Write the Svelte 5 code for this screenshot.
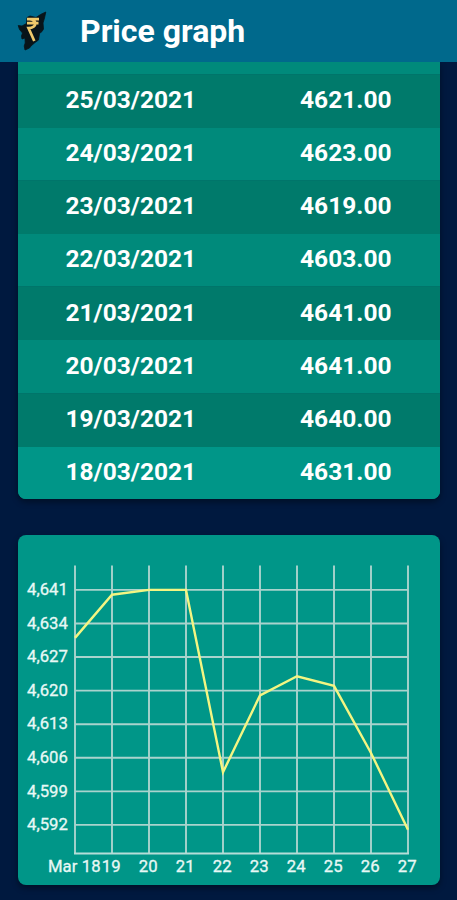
<script>
  const rows = [
    { date: '25/03/2021', price: 4621 },
    { date: '24/03/2021', price: 4623 },
    { date: '23/03/2021', price: 4619 },
    { date: '22/03/2021', price: 4603 },
    { date: '21/03/2021', price: 4641 },
    { date: '20/03/2021', price: 4641 },
    { date: '19/03/2021', price: 4640 },
    { date: '18/03/2021', price: 4631 }
  ];

  // oldest first, the last two days are newer than the table above
  const prices = [...rows.map((row) => row.price).reverse(), 4607, 4591];
  const labels = ['Mar 18', '19', '20', '21', '22', '23', '24', '25', '26', '27'];
  const ticks = [4641, 4634, 4627, 4620, 4613, 4606, 4599, 4592];

  const left = 57;
  const right = 390;
  const top = 30.5;
  const bottom = 318.6;

  const x = (i) => left + i * 37;
  const y = (value) => 54.9 + (4641 - value) * 4.796;

  const line = prices.map((price, i) => `${x(i)},${y(price)}`).join(' ');
</script>

<header class="app-bar">
  <svg class="logo" viewBox="0 0 32 44" width="32" height="44">
    <path
      class="map"
      d="M28.8 3 L27.5 9 L26 14 L26.5 20 L25 22.5 L22.5 24.5 L21.5 31 L18 33.5 L14 37 L12.5 39 L8 41 L7.2 37 L8.2 34 L8 29 L5 30 L4.5 27 L5.5 24 L2.5 20.5 L1.2 16.5 L5 17 L9.5 14.5 L10 8.5 L13 7 L19 8.5 L23.5 5.5 Z"
    />
    <path class="rupee" d="M10 10.2 H22 M10 14.2 H21.5 M12 10.2 C20.5 10.2 20.5 19 11.5 19 L17.3 32" />
  </svg>
  <h1>Price graph</h1>
</header>

<main>
  <section class="card prices">
    <div class="row cut"></div>
    {#each rows as row}
      <div class="row">
        <span class="date">{row.date}</span>
        <span class="price">{row.price.toFixed(2)}</span>
      </div>
    {/each}
  </section>

  <section class="card chart">
    <svg viewBox="0 0 422 350" width="422" height="350">
      {#each ticks as tick}
        <line class="grid" x1={left} x2={right} y1={y(tick)} y2={y(tick)} />
        <text class="label" x="9" y={y(tick) + 5.3}>{tick.toLocaleString('en-US')}</text>
      {/each}
      {#each labels as label, i}
        <line class="grid" x1={x(i)} x2={x(i)} y1={top} y2={bottom} />
        <text class="label" text-anchor="middle" x={x(i) - 0.7} y="337">{label}</text>
      {/each}
      <line class="axis" x1={left - 1} x2={right + 1} y1={bottom} y2={bottom} />
      <polyline class="line" points={line} />
    </svg>
  </section>
</main>

<style>
  :global(body) {
    background: #00193f;
    font-family: Roboto, sans-serif;
    color: #fff;
  }

  .app-bar {
    display: flex;
    align-items: center;
    height: 62px;
    padding-left: 17px;
    background: #00698c;
  }

  .logo {
    flex: none;
    margin-right: 31px;
  }
  .map {
    fill: #08141a;
    stroke: #08141a;
    stroke-width: 0.8;
    stroke-linejoin: round;
  }
  .rupee {
    fill: none;
    stroke: #efc96c;
    stroke-width: 2.7;
  }

  h1 {
    margin: 0;
    padding-top: 1px;
    font-size: 32px;
    font-weight: 700;
    line-height: 61px;
  }

  main {
    display: flex;
    flex-direction: column;
    gap: 36px;
    height: 838px;
    padding: 0 17px 0 18px;
    box-sizing: border-box;
    overflow: hidden;
  }

  .card {
    overflow: hidden;
    border-radius: 8px;
    background: #009688;
    box-shadow: 0 3px 6px rgba(0, 0, 0, 0.4);
  }

  .prices {
    flex: none;
    border-radius: 0 0 8px 8px;
  }

  .row {
    display: flex;
    align-items: center;
    justify-content: space-between;
    height: 52.2px;
    padding: 0 48.5px 2.6px 47.5px;
    box-sizing: border-box;
    background: #008a7b;
    font-size: 24.5px;
    font-weight: 700;
  }
  .row:nth-child(even) {
    height: 54.1px;
    padding-bottom: 3.4px;
    background: #007a6b;
    border-top: 1px solid #00756a;
  }
  .row:last-child {
    background: #009688;
  }
  .row.cut {
    height: 11.8px;
  }

  .chart {
    flex: none;
    height: 350px;
  }
  .chart svg {
    display: block;
  }

  .grid {
    stroke: #a9d3cd;
    stroke-width: 1.9;
  }
  .axis {
    stroke: #b5ddd8;
    stroke-width: 2;
  }
  .line {
    fill: none;
    stroke: #f3f582;
    stroke-width: 2.4;
  }
  .label {
    fill: #e8f8f5;
    stroke: #e8f8f5;
    stroke-width: 0.3;
    font-size: 16.7px;
  }
  .label[y='337'] {
    letter-spacing: 0.1px;
  }
</style>
